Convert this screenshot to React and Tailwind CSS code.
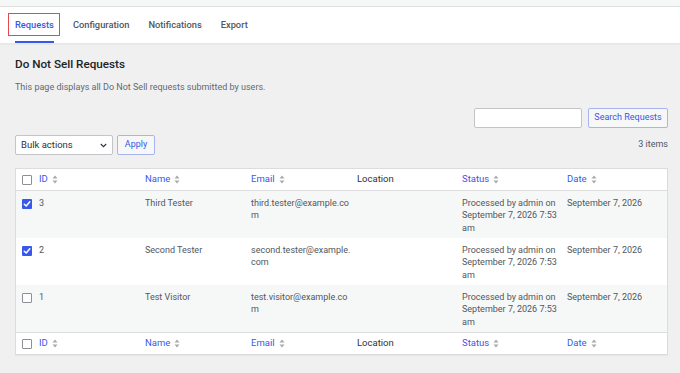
import React from "react";

const BLUE = "text-[#3858e9]";

function SortIcon() {
  return (
    <svg width="6" height="9" viewBox="0 0 6 9" className="ml-[4px] inline-block">
      <path d="M3 0.5 L5.5 3.5 H0.5 Z" fill="#a7aaad" />
      <path d="M3 8.5 L5.5 5.5 H0.5 Z" fill="#a7aaad" />
    </svg>
  );
}

function Checkbox({ checked }) {
  if (checked) {
    return (
      <div className="w-[10px] h-[10px] rounded-[1px] bg-[#3858e9] flex items-center justify-center">
        <svg width="8" height="8" viewBox="0 0 8 8">
          <path d="M1.3 4.2 L3.2 6 L6.8 1.8" stroke="white" strokeWidth="1.5" fill="none" strokeLinecap="round" strokeLinejoin="round" />
        </svg>
      </div>
    );
  }
  return <div className="w-[10px] h-[10px] rounded-[1px] border border-[#8c8f94] bg-white" />;
}

const cols = "grid grid-cols-[23px_106px_106px_106px_105px_105px_1fr]";

function HeadRow({ top }) {
  return (
    <div className={`${cols} h-[22px] items-center bg-white ${top ? "border-b" : "border-t"} border-[#dcdcde] text-[9.5px]`}>
      <div className="pl-[6px]"><Checkbox /></div>
      <div className={`${BLUE} flex items-center`}>ID<SortIcon /></div>
      <div className={`${BLUE} flex items-center`}>Name<SortIcon /></div>
      <div className={`${BLUE} flex items-center`}>Email<SortIcon /></div>
      <div className="text-[#2c3338]">Location</div>
      <div className={`${BLUE} flex items-center`}>Status<SortIcon /></div>
      <div className={`${BLUE} flex items-center`}>Date<SortIcon /></div>
    </div>
  );
}

function Row({ id, name, email, checked, alt }) {
  return (
    <div className={`${cols} h-[47px] pt-[6px] leading-[12.3px] text-[9px] text-[#50575e] ${alt ? "bg-[#f6f7f7]" : "bg-white"}`}>
      <div className="pl-[6px] pt-[2px]"><Checkbox checked={checked} /></div>
      <div className="text-[#50575e]">{id}</div>
      <div>{name}</div>
      <div className="pr-[5px] break-all">{email}</div>
      <div></div>
      <div className="pr-[10px]">Processed by admin on September 7, 2026 7:53 am</div>
      <div>September 7, 2026</div>
    </div>
  );
}

export default function App() {
  return (
    <div className="w-[680px] h-[373px] bg-[#f0f0f1] overflow-hidden" style={{ fontFamily: "Roboto, 'Noto Sans', sans-serif" }}>
      <div className="h-[7px] bg-[#f6f7f7] border-b border-[#e0e0e0]" />
      <div className="h-[38px] bg-white border-b-2 border-[#e8e8e8] flex items-end pl-[15px] gap-[19px] text-[9.3px]">
        <div className="relative h-full flex items-center">
          <span className="text-[#3858e9] font-medium">Requests</span>
          <div className="absolute left-0 right-0 bottom-[0px] h-[2px] bg-[#3858e9]" />
          <div className="absolute left-[-7px] right-[-6px] top-[6px] h-[23px] border border-[#e5484d]" />
        </div>
        <div className="h-full flex items-center text-[#50575e] font-medium">Configuration</div>
        <div className="h-full flex items-center text-[#50575e] font-medium">Notifications</div>
        <div className="h-full flex items-center text-[#50575e] font-medium">Export</div>
      </div>
      <div className="pl-[15px] pr-[12px]">
        <div className="pt-[10px] text-[11.7px] font-medium text-[#1d2327] leading-[18px]">Do Not Sell Requests</div>
        <div className="mt-[8px] text-[9px] text-[#646970] leading-[12px]">This page displays all Do Not Sell requests submitted by users.</div>
        <div className="mt-[15px] flex justify-end gap-[6px]">
          <div className="w-[108px] h-[20px] bg-white border border-[#c3c4c7] rounded-[2px]" />
          <div className="w-[80px] h-[20px] border border-[#a7b4f0] bg-[#f6f7f7] rounded-[2px] flex items-center justify-center text-[9px] text-[#3858e9]">Search Requests</div>
        </div>
        <div className="mt-[7px] flex items-center">
          <div className="w-[98px] h-[20px] bg-white border border-[#c3c4c7] rounded-[2px] flex items-center justify-between pl-[5px] pr-[5px] text-[9.5px] text-[#2c3338]">
            <span>Bulk actions</span>
            <svg width="7" height="5" viewBox="0 0 7 5"><path d="M0.8 1 L3.5 3.7 L6.2 1" stroke="#2c3338" strokeWidth="1.1" fill="none" /></svg>
          </div>
          <div className="ml-[4px] w-[38px] h-[20px] border border-[#a7b4f0] bg-[#f6f7f7] rounded-[2px] flex items-center justify-center text-[9px] text-[#3858e9]">Apply</div>
          <div className="ml-auto text-[9px] text-[#50575e]">3 items</div>
        </div>
        <div className="mt-[13px] border border-[#dcdcde] shadow-[0_1px_1px_rgba(0,0,0,0.04)]">
          <HeadRow top />
          <Row id="3" name="Third Tester" email="third.tester@example.com" checked alt />
          <Row id="2" name="Second Tester" email="second.tester@example.com" checked />
          <Row id="1" name="Test Visitor" email="test.visitor@example.com" alt />
          <HeadRow />
        </div>
      </div>
    </div>
  );
}
